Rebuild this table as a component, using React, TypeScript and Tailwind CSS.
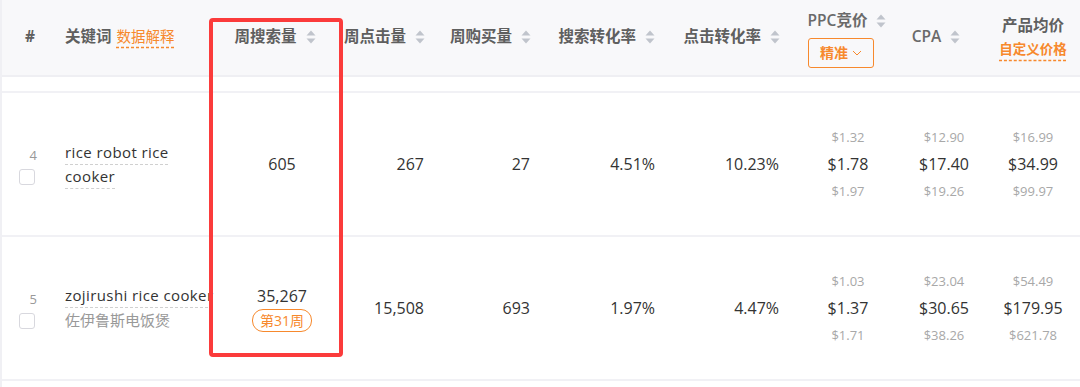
import React from "react";

const font = { fontFamily: '"Open Sans", "Noto Sans CJK SC", sans-serif' };

function Sort() {
  return (
    <svg width="10" height="14" viewBox="0 0 10 14" className="ml-[9px] shrink-0">
      <path d="M5 0.5 L9.5 5.5 H0.5 Z" fill="#c0c4cc" />
      <path d="M5 13.5 L9.5 8.5 H0.5 Z" fill="#c0c4cc" />
    </svg>
  );
}

function Price({ top, mid, bot }: { top: string; mid: string; bot: string }) {
  return (
    <div className="flex flex-col items-center">
      <span className="text-[13px] leading-[20px] text-[#a8a8a8]">{top}</span>
      <span className="my-[6px] text-[16px] leading-[22px] text-[#333]">{mid}</span>
      <span className="text-[13px] leading-[20px] text-[#a8a8a8]">{bot}</span>
    </div>
  );
}

const rows = [
  {
    n: "4",
    kw: "rice robot rice cooker",
    cn: "",
    search: "605",
    week: "",
    click: "267",
    buy: "27",
    scr: "4.51%",
    ccr: "10.23%",
    ppc: ["$1.32", "$1.78", "$1.97"],
    cpa: ["$12.90", "$17.40", "$19.26"],
    price: ["$16.99", "$34.99", "$99.97"],
  },
  {
    n: "5",
    kw: "zojirushi rice cooker",
    cn: "佐伊鲁斯电饭煲",
    search: "35,267",
    week: "第31周",
    click: "15,508",
    buy: "693",
    scr: "1.97%",
    ccr: "4.47%",
    ppc: ["$1.03", "$1.37", "$1.71"],
    cpa: ["$23.04", "$30.65", "$38.26"],
    price: ["$54.49", "$179.95", "$621.78"],
  },
];

const grid = "grid grid-cols-[60px_165px_110px_105px_105px_125px_120px_112px_80px_98px]";

export default function App() {
  return (
    <div className="relative h-[387px] w-[1080px] overflow-hidden bg-white" style={font}>
      <div className="h-full border-l-2 border-[#f0f0f4]">
        {/* header */}
        <div className={`${grid} h-[75px] bg-[#f8f8fa] text-[15.5px] font-bold text-[#5f5f5f]`}>
          <div className="flex items-center justify-center pr-[4px] pb-[2px]">#</div>
          <div className="flex items-center pl-[3px] pb-[2px]">
            <span>关键词</span>
            <span className="ml-[5px] text-[14.5px] font-normal text-[#f7892d] underline decoration-dashed decoration-[#f7892d] underline-offset-[5px]">
              数据解释
            </span>
          </div>
          <div className="flex items-center justify-center pb-[2px] pr-[14px]">
            <span>周搜索量</span>
            <Sort />
          </div>
          <div className="flex items-center justify-end pb-[2px] pr-[17px]">
            <span>周点击量</span>
            <Sort />
          </div>
          <div className="flex items-center justify-end pb-[2px] pr-[16px]">
            <span>周购买量</span>
            <Sort />
          </div>
          <div className="flex items-center justify-end pb-[2px] pr-[17px]">
            <span>搜索转化率</span>
            <Sort />
          </div>
          <div className="flex items-center justify-end pb-[2px] pr-[12px]">
            <span>点击转化率</span>
            <Sort />
          </div>
          <div className="flex flex-col items-center justify-center pt-[2px] pr-[14px]">
            <div className="flex items-center pl-[12px] font-semibold text-[#6a6a6a]">
              <span>PPC竞价</span>
              <Sort />
            </div>
            <div className="mt-[5px] flex h-[30px] w-[66px] items-center justify-center rounded-[3px] border border-[#f7892d] text-[14px] text-[#f7892d]">
              <span>精准</span>
              <svg width="10" height="6" viewBox="0 0 10 6" className="ml-[4px]">
                <path d="M1 1 L5 5 L9 1" fill="none" stroke="#f7892d" strokeWidth="1" />
              </svg>
            </div>
          </div>
          <div className="flex items-center justify-center pb-[2px] pr-[16px] font-semibold text-[#6a6a6a]">
            <span>CPA</span>
            <Sort />
          </div>
          <div className="flex flex-col items-center justify-center pb-[2px]">
            <span>产品均价</span>
            <span className="mt-[1px] text-[13.5px] text-[#f7892d] underline decoration-dashed decoration-[#f7892d] underline-offset-[6px]">
              自定义价格
            </span>
          </div>
        </div>
        <div className="h-[2px] bg-[#efeff3]" />
        <div className="h-[14px] bg-white" />
        {rows.map((r) => (
          <div key={r.n}>
            <div className="h-[2px] bg-[#f1f1f5]" />
            <div className={`${grid} h-[142px] text-[15px] text-[#333]`}>
              <div className="flex flex-col items-end justify-center pr-[27px] pt-[2px]">
                <span className="-mr-[2px] text-[13px] leading-[18px] text-[#999]">{r.n}</span>
                <span className="mt-[5px] h-[16px] w-[16px] rounded-[3px] border border-[#d8d8de] bg-white" />
              </div>
              <div className="flex flex-col justify-center pl-[3px] pr-[4px]">
                <span className="max-w-[156px] leading-[24px] tracking-[0.4px] text-[#333] underline decoration-dashed decoration-[#d0d0d0] decoration-1 underline-offset-[6px]">
                  {r.kw}
                </span>
                {r.cn && <span className="leading-[26px] text-[#999]">{r.cn}</span>}
              </div>
              <div className="flex flex-col items-center justify-center">
                <span className="text-[16px] leading-[24px]">{r.search}</span>
                {r.week && (
                  <span className="mt-[1px] flex h-[23px] items-center rounded-[11px] border border-[#f7892d] px-[7px] text-[14px] text-[#f7892d]">
                    {r.week}
                  </span>
                )}
              </div>
              <div className="flex items-center justify-end pr-[18px] text-[16px]">{r.click}</div>
              <div className="flex items-center justify-end pr-[17px] text-[16px]">{r.buy}</div>
              <div className="flex items-center justify-end pr-[17px] text-[16px]">{r.scr}</div>
              <div className="flex items-center justify-end pr-[13px] text-[16px]">{r.ccr}</div>
              <div className="flex items-center justify-center">
                <Price top={r.ppc[0]} mid={r.ppc[1]} bot={r.ppc[2]} />
              </div>
              <div className="flex items-center justify-center">
                <Price top={r.cpa[0]} mid={r.cpa[1]} bot={r.cpa[2]} />
              </div>
              <div className="flex items-center justify-center">
                <Price top={r.price[0]} mid={r.price[1]} bot={r.price[2]} />
              </div>
            </div>
          </div>
        ))}
        <div className="h-[2px] bg-[#f1f1f5]" />
      </div>
      <div className="pointer-events-none absolute left-[209px] top-[18px] h-[339px] w-[134px] rounded-[4px] border-4 border-[#fb3b3b]" />
    </div>
  );
}
